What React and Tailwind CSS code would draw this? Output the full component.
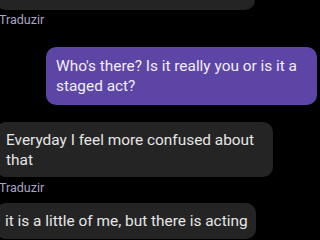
export default function App() {
  return (
    <div className="w-[320px] h-[240px] overflow-hidden bg-black font-['Roboto','Liberation_Sans',sans-serif] text-[#e6e6e6]">
      <div className="flex flex-col -ml-[4px]">
        <div className="w-[259px] h-[30px] -mt-[20px] rounded-[10px] bg-[#242424]" />
        <div className="ml-[3px] mt-[2px] text-[12.5px] leading-[16px] text-[#aaa4c8]">Traduzir</div>

        <div className="self-end mr-[3px] mt-[19px] w-[271px] rounded-[10px] bg-[#5d45a6] px-[10px] py-[9px] text-[15.4px] leading-[20px] text-[#f1eef8]">
          Who's there? Is it really you or is it a staged act?
        </div>

        <div className="mt-[17px] w-[277px] rounded-[10px] bg-[#242424] px-[10px] pt-[8px] pb-[7px] text-[15.4px] leading-[20px]">
          Everyday I feel more confused about that
        </div>
        <div className="ml-[3px] mt-[3px] text-[12.5px] leading-[16px] text-[#aaa4c8]">Traduzir</div>

        <div className="self-start mt-[7px] rounded-[10px] bg-[#242424] pl-[9px] pr-[8px] pt-[8px] pb-[8px] text-[15.4px] leading-[20px] whitespace-nowrap">
          it is a little of me, but there is acting
        </div>
      </div>
    </div>
  );
}
